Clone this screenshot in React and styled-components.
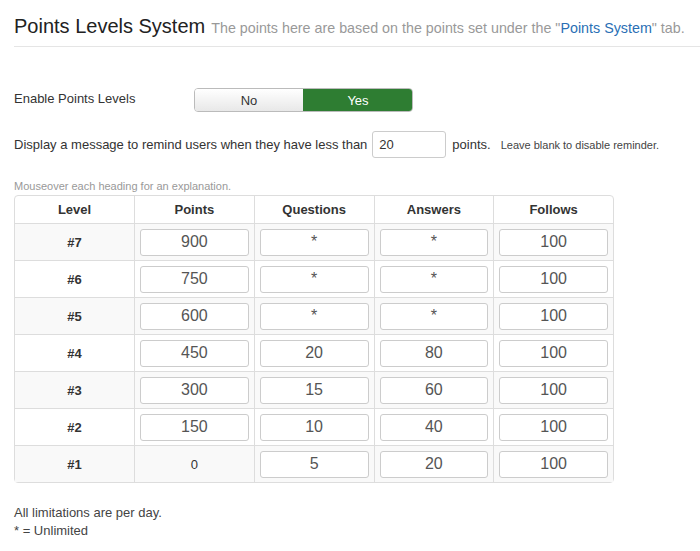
import React from "react";
import styled, { createGlobalStyle } from "styled-components";

const Global = createGlobalStyle`
  html, body { margin: 0; padding: 0; background: #fff; }
  body { font-family: "Liberation Sans", Arial, sans-serif; color: #333; font-size: 13px; }
`;

const Page = styled.div`
  padding: 0 0 0 14px;
`;

const Header = styled.div`
  display: flex;
  align-items: baseline;
  gap: 6px;
  padding: 15px 0 8px;
  border-bottom: 1px solid #e5e5e5;
`;

const Title = styled.h1`
  margin: 0;
  font-size: 20px;
  font-weight: normal;
  color: #222;
`;

const Sub = styled.span`
  font-size: 14.3px;
  color: #999;
`;

const Link = styled.a`
  color: #2a6fb5;
  text-decoration: none;
`;

const ToggleRow = styled.div`
  display: flex;
  align-items: center;
  margin-top: 41px;
  height: 24px;
`;

const Label = styled.div`
  width: 180px;
  font-size: 13px;
  margin-top: -4px;
`;

const Toggle = styled.div`
  display: flex;
  width: 219px;
  height: 24px;
  border: 1px solid #bbb;
  border-radius: 4px;
  overflow: hidden;
  box-sizing: border-box;
`;

const ToggleBtn = styled.div`
  flex: 1;
  display: flex;
  align-items: center;
  justify-content: center;
  font-size: 13px;
  color: ${(p) => (p.$on ? "#fff" : "#333")};
  background: ${(p) =>
    p.$on ? "#2e7d32" : "linear-gradient(#ffffff, #e8e8e8)"};
  border-left: ${(p) => (p.$on ? "1px solid #2e7d32" : "none")};
`;

const ReminderRow = styled.div`
  display: flex;
  align-items: center;
  margin-top: 19px;
  font-size: 13px;
`;

const SmallInput = styled.div`
  width: 74px;
  height: 27px;
  box-sizing: border-box;
  border: 1px solid #ccc;
  border-radius: 3px;
  margin: 0 6px 0 5px;
  display: flex;
  align-items: center;
  padding-left: 6px;
  font-size: 13px;
`;

const Points = styled.span`
  font-size: 13px;
  margin-right: 10px;
`;

const Hint = styled.span`
  font-size: 11px;
  color: #444;
`;

const Mouseover = styled.div`
  margin-top: 22px;
  font-size: 11px;
  color: #999;
`;

const Table = styled.table`
  margin-top: 3px;
  border-collapse: separate;
  border-spacing: 0;
  border: 1px solid #ddd;
  border-radius: 4px;
  width: 600px;
  table-layout: fixed;
`;

const Th = styled.th`
  height: 27px;
  font-size: 13px;
  font-weight: bold;
  color: #333;
  text-align: center;
  padding: 0;
  border-left: ${(p) => (p.$first ? "none" : "1px solid #ddd")};
`;

const Tr = styled.tr`
  background: ${(p) => (p.$striped ? "#f9f9f9" : "#fff")};
`;

const Td = styled.td`
  height: 36px;
  padding: 0 5px;
  text-align: center;
  border-top: 1px solid #ddd;
  border-left: ${(p) => (p.$first ? "none" : "1px solid #ddd")};
  font-size: 13px;
  font-weight: ${(p) => (p.$bold ? "bold" : "normal")};
  vertical-align: middle;
`;

const CellInput = styled.div`
  height: 27px;
  box-sizing: border-box;
  border: 1px solid #ccc;
  border-radius: 3px;
  background: #fff;
  display: flex;
  align-items: center;
  justify-content: center;
  font-size: 16px;
  color: #555;
`;

const Footer = styled.div`
  margin-top: 21px;
  font-size: 13px;
  color: #444;
  line-height: 18px;
`;

const rows = [
  ["#7", "900", "*", "*", "100"],
  ["#6", "750", "*", "*", "100"],
  ["#5", "600", "*", "*", "100"],
  ["#4", "450", "20", "80", "100"],
  ["#3", "300", "15", "60", "100"],
  ["#2", "150", "10", "40", "100"],
  ["#1", null, "5", "20", "100"],
];

export default function App() {
  return (
    <Page>
      <Global />
      <Header>
        <Title>Points Levels System</Title>
        <Sub>
          The points here are based on the points set under the "
          <Link href="#">Points System</Link>" tab.
        </Sub>
      </Header>
      <ToggleRow>
        <Label>Enable Points Levels</Label>
        <Toggle>
          <ToggleBtn>No</ToggleBtn>
          <ToggleBtn $on>Yes</ToggleBtn>
        </Toggle>
      </ToggleRow>
      <ReminderRow>
        Display a message to remind users when they have less than
        <SmallInput>20</SmallInput>
        <Points>points.</Points>
        <Hint>Leave blank to disable reminder.</Hint>
      </ReminderRow>
      <Mouseover>Mouseover each heading for an explanation.</Mouseover>
      <Table>
        <colgroup>
          <col style={{ width: 119 }} />
          <col />
          <col />
          <col />
          <col />
        </colgroup>
        <thead>
          <tr>
            <Th $first>Level</Th>
            <Th>Points</Th>
            <Th>Questions</Th>
            <Th>Answers</Th>
            <Th>Follows</Th>
          </tr>
        </thead>
        <tbody>
          {rows.map((r, i) => (
            <Tr key={r[0]} $striped={i % 2 === 0}>
              <Td $first $bold>
                {r[0]}
              </Td>
              <Td>{r[1] === null ? "0" : <CellInput>{r[1]}</CellInput>}</Td>
              <Td>
                <CellInput>{r[2]}</CellInput>
              </Td>
              <Td>
                <CellInput>{r[3]}</CellInput>
              </Td>
              <Td>
                <CellInput>{r[4]}</CellInput>
              </Td>
            </Tr>
          ))}
        </tbody>
      </Table>
      <Footer>
        All limitations are per day.
        <br />* = Unlimited
      </Footer>
    </Page>
  );
}
